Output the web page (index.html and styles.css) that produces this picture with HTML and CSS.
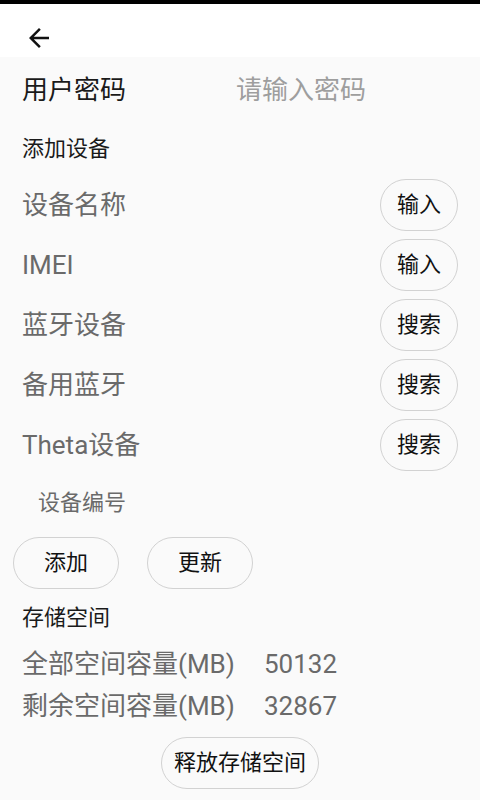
FILE: index.html
```html
<!DOCTYPE html>
<html lang="zh">
<head>
<meta charset="utf-8">
<title>添加设备</title>
<link rel="stylesheet" href="styles.css">
</head>
<body>
<div class="status"></div>
<div class="toolbar">
  <svg class="back" viewBox="0 0 24 24" width="30" height="30"><path d="M20 11H7.83l5.59-5.59L12 4l-8 8 8 8 1.41-1.41L7.83 13H20v-2z" fill="#111"/></svg>
</div>
<div class="content">
  <div class="pwd-row">
    <span class="pwd-label">用户密码</span>
    <span class="placeholder">请输入密码</span>
  </div>
  <div class="section">添加设备</div>
  <div class="device-row"><span class="label">设备名称</span><span class="btn">输入</span></div>
  <div class="device-row"><span class="label">IMEI</span><span class="btn">输入</span></div>
  <div class="device-row"><span class="label">蓝牙设备</span><span class="btn">搜索</span></div>
  <div class="device-row"><span class="label">备用蓝牙</span><span class="btn">搜索</span></div>
  <div class="device-row"><span class="label">Theta设备</span><span class="btn">搜索</span></div>
  <div class="sub-label">设备编号</div>
  <div class="btn-row">
    <span class="btn wide">添加</span>
    <span class="btn wide">更新</span>
  </div>
  <div class="section storage">存储空间</div>
  <div class="stat"><span class="stat-label">全部空间容量(MB)</span><span class="stat-value">50132</span></div>
  <div class="stat"><span class="stat-label">剩余空间容量(MB)</span><span class="stat-value">32867</span></div>
  <div class="release-row"><span class="btn release">释放存储空间</span></div>
</div>
</body>
</html>
```
FILE: styles.css
```css
html, body {
  margin: 0;
  padding: 0;
}
body {
  width: 480px;
  height: 800px;
  overflow: hidden;
  background: #fafafa;
  font-family: Roboto, "Noto Sans CJK SC", sans-serif;
  line-height: 1;
  color: #222;
}
.status {
  height: 4px;
  background: #000;
}
.toolbar {
  height: 53px;
  background: #fff;
  box-sizing: border-box;
  padding: 19px 0 0 24px;
}
.back {
  display: block;
}
.content {
  padding: 0 22px;
}
.pwd-row {
  height: 66px;
  display: flex;
  align-items: center;
  font-size: 26px;
}
.pwd-label {
  width: 214px;
  color: #1a1a1a;
}
.placeholder {
  color: #9e9e9e;
}
.section {
  height: 52px;
  display: flex;
  align-items: center;
  font-size: 22px;
  color: #1a1a1a;
}
.device-row {
  height: 60px;
  display: flex;
  align-items: center;
  justify-content: space-between;
}
.label {
  font-size: 26px;
  color: #6a6a6a;
}
.btn {
  display: inline-flex;
  align-items: center;
  justify-content: center;
  box-sizing: border-box;
  height: 52px;
  width: 78px;
  border: 1.5px solid #d2d2d2;
  border-radius: 26px;
  font-size: 22px;
  color: #111;
}
.sub-label {
  height: 56px;
  display: flex;
  align-items: center;
  padding-left: 16px;
  font-size: 22px;
  color: #6a6a6a;
}
.btn-row {
  display: flex;
  gap: 28px;
  margin: 6px 0 0 -9px;
}
.btn.wide {
  width: 106px;
}
.section.storage {
  height: 54px;
  box-sizing: border-box;
  padding-top: 4px;
}
.stat {
  height: 42px;
  display: flex;
  align-items: center;
  font-size: 26px;
  color: #6a6a6a;
}
.stat-label {
  width: 242px;
}
.release-row {
  display: flex;
  justify-content: center;
  margin: 10px -22px 0;
}
.btn.release {
  width: 158px;
}
```
